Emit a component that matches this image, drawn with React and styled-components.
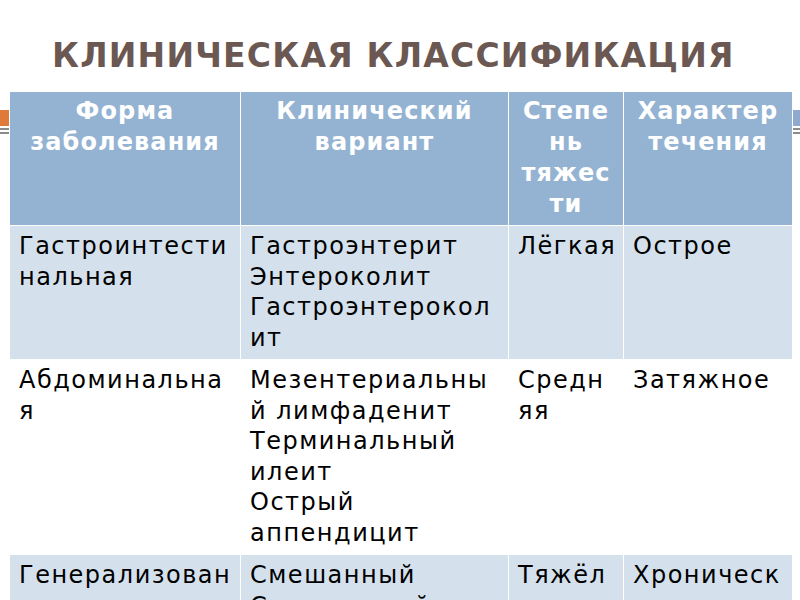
import React from "react";
import styled, { createGlobalStyle } from "styled-components";

const GlobalStyle = createGlobalStyle`
  html, body { margin: 0; padding: 0; background: #ffffff; }
  body { overflow: hidden; }
`;

const Slide = styled.div`
  position: relative;
  width: 800px;
  height: 600px;
  overflow: hidden;
  background: #ffffff;
  font-family: "DejaVu Sans", Verdana, sans-serif;
`;

const Title = styled.h1`
  margin: 36px 0 0 52px;
  font-size: 33px;
  line-height: 40px;
  font-weight: 700;
  letter-spacing: 1.2px;
  color: #6b5852;
  white-space: nowrap;
`;

const Ribbon = styled.div`
  position: absolute;
  left: 0;
  top: 110px;
  width: 800px;
  height: 26px;
  z-index: 0;
`;

const Bar = styled.div`
  position: absolute;
  top: 0;
  height: 16px;
  width: 60px;
  ${(p) => (p.$side === "left" ? "left: 0;" : "right: 0;")}
  background: ${(p) => p.$color};
`;

const Rule = styled.div`
  position: absolute;
  left: 0;
  right: 0;
  top: ${(p) => p.$top}px;
  height: 2px;
  background: #8c8c8c;
`;

const Table = styled.table`
  position: relative;
  z-index: 1;
  margin: 16px 0 0 9px;
  border-collapse: collapse;
  table-layout: fixed;
  width: 783px;
`;

const HeadCell = styled.th`
  background: #94b3d3;
  color: #ffffff;
  font-weight: 700;
  font-size: 24px;
  line-height: 31px;
  letter-spacing: 1.1px;
  text-align: center;
  vertical-align: top;
  padding: 4px 6px 5px;
  overflow-wrap: anywhere;
  border: 1px solid #ffffff;
  border-top: none;
`;

const Row = styled.tr`
  background: ${(p) => (p.$banded ? "#d4e0ec" : "#ffffff")};
`;

const Cell = styled.td`
  color: #000000;
  font-size: 24px;
  line-height: 30.5px;
  letter-spacing: 1.5px;
  vertical-align: top;
  padding: 5px 6px 6px 9px;
  overflow-wrap: anywhere;
  border: 1px solid #ffffff;
`;

const Line = styled.div``;

const columns = [
  { w: 231, title: "Форма заболевания" },
  { w: 268, title: "Клинический вариант" },
  { w: 115, title: "Степень тяжести" },
  { w: 169, title: "Характер течения" },
];

const rows = [
  [["Гастроинтестинальная"], ["Гастроэнтерит", "Энтероколит", "Гастроэнтероколит"], ["Лёгкая"], ["Острое"]],
  [["Абдоминальная"], ["Мезентериальный лимфаденит", "Терминальный илеит", "Острый аппендицит"], ["Средняя"], ["Затяжное"]],
  [["Генерализованная"], ["Смешанный", "Септический"], ["Тяжёлая"], ["Хроническое"]],
];

export default function App() {
  return (
    <Slide>
      <GlobalStyle />
      <Ribbon>
        <Bar $side="left" $color="#e07a3a" />
        <Bar $side="right" $color="#8eabcf" />
        <Rule $top={18} />
        <Rule $top={22} />
      </Ribbon>
      <Title>КЛИНИЧЕСКАЯ КЛАССИФИКАЦИЯ</Title>
      <Table>
        <colgroup>
          {columns.map((c, i) => (
            <col key={i} style={{ width: c.w }} />
          ))}
        </colgroup>
        <thead>
          <tr>
            {columns.map((c, i) => (
              <HeadCell key={i}>{c.title}</HeadCell>
            ))}
          </tr>
        </thead>
        <tbody>
          {rows.map((r, ri) => (
            <Row key={ri} $banded={ri % 2 === 0}>
              {r.map((lines, ci) => (
                <Cell key={ci}>
                  {lines.map((l, li) => (
                    <Line key={li}>{l}</Line>
                  ))}
                </Cell>
              ))}
            </Row>
          ))}
        </tbody>
      </Table>
    </Slide>
  );
}
